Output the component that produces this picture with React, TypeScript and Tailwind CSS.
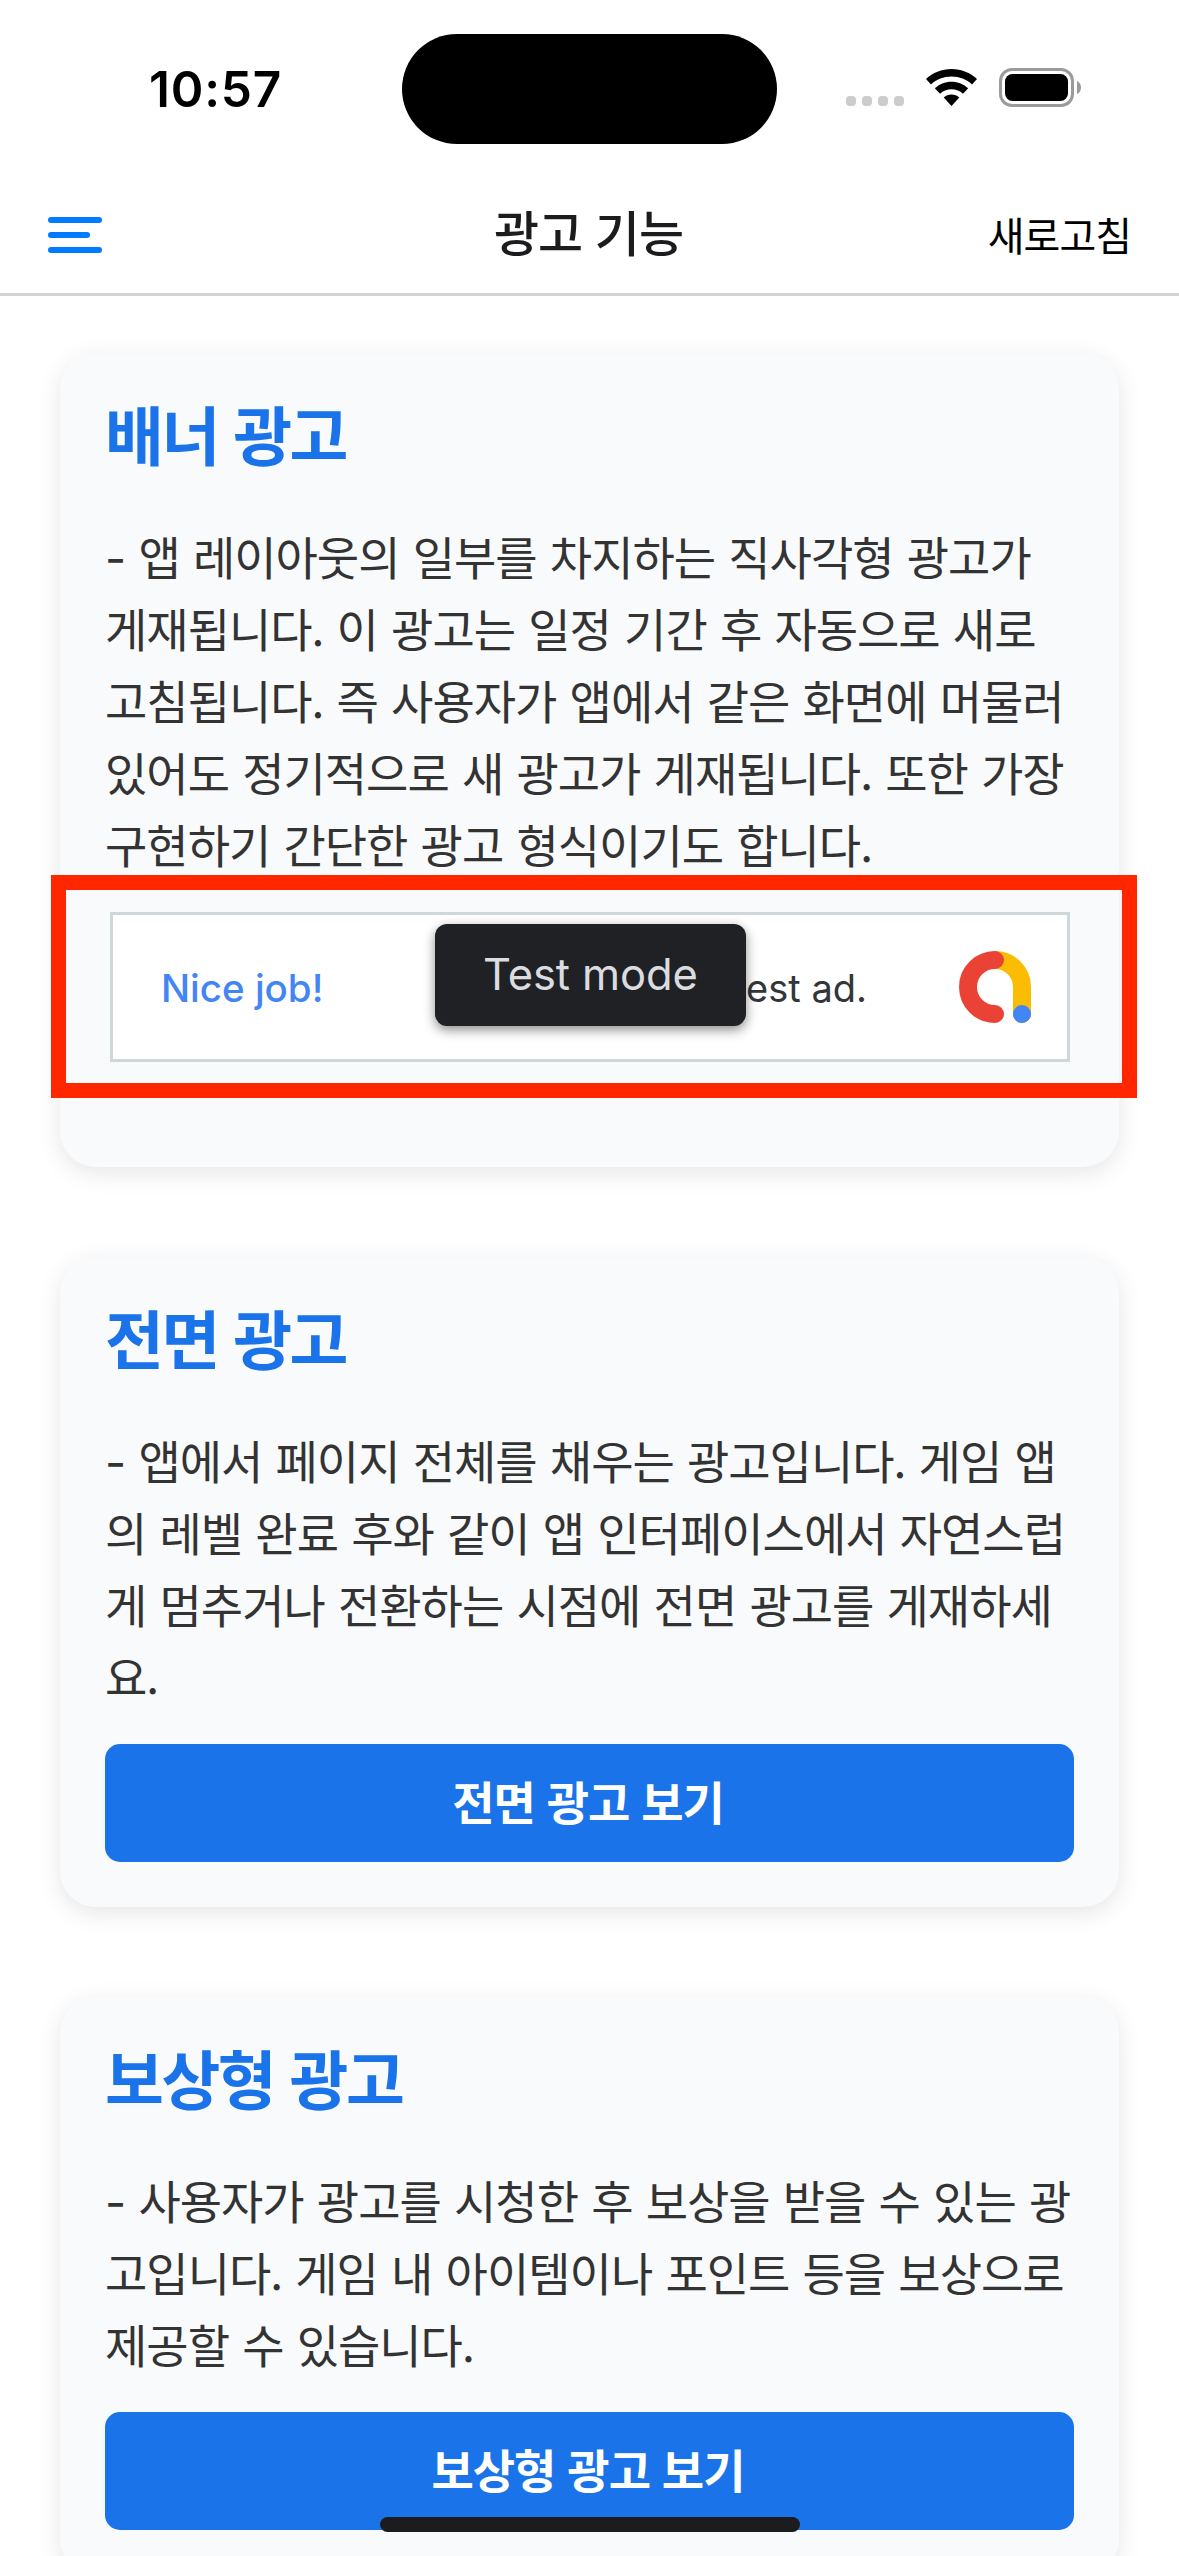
import type { ReactNode } from 'react';

type AdSection = {
  title: string;
  lines: string[];
  action?: string;
};

const SECTIONS: AdSection[] = [
  {
    title: '배너 광고',
    lines: [
      '앱 레이아웃의 일부를 차지하는 직사각형 광고가',
      '게재됩니다. 이 광고는 일정 기간 후 자동으로 새로',
      '고침됩니다. 즉 사용자가 앱에서 같은 화면에 머물러',
      '있어도 정기적으로 새 광고가 게재됩니다. 또한 가장',
      '구현하기 간단한 광고 형식이기도 합니다.',
    ],
  },
  {
    title: '전면 광고',
    lines: [
      '앱에서 페이지 전체를 채우는 광고입니다. 게임 앱',
      '의 레벨 완료 후와 같이 앱 인터페이스에서 자연스럽',
      '게 멈추거나 전환하는 시점에 전면 광고를 게재하세',
      '요.',
    ],
    action: '전면 광고 보기',
  },
  {
    title: '보상형 광고',
    lines: [
      '사용자가 광고를 시청한 후 보상을 받을 수 있는 광',
      '고입니다. 게임 내 아이템이나 포인트 등을 보상으로',
      '제공할 수 있습니다.',
    ],
    action: '보상형 광고 보기',
  },
];

function WifiIcon() {
  return (
    <svg width="51" height="37" viewBox="0 0 51 37">
      <path d="M25.5 0C35.3 0 44.3 3.8 51 10L46 15.4C40.6 10.6 33.4 7.6 25.5 7.6S10.4 10.6 5 15.4L0 10C6.7 3.8 15.7 0 25.5 0Z" />
      <path d="M25.5 12.7C32 12.7 37.8 15.2 42.2 19.3L37 24.7C34 22 30 20.3 25.5 20.3S17 22 14 24.7L8.8 19.3C13.2 15.2 19 12.7 25.5 12.7Z" />
      <path d="M25.5 25.4C28.5 25.4 31.2 26.5 33.3 28.5L25.5 37L17.7 28.5C19.8 26.5 22.5 25.4 25.5 25.4Z" />
    </svg>
  );
}

function BatteryIcon() {
  return (
    <svg width="82" height="39" viewBox="0 0 82 39">
      <rect x="1.5" y="1.5" width="72" height="36" rx="11.5" fill="none" stroke="#9b9b9b" strokeWidth="3" />
      <rect x="6" y="6" width="63" height="27" rx="7.5" />
      <path d="M78 13C80.5 14 82 16.5 82 19.5S80.5 25 78 26Z" fill="#9b9b9b" />
    </svg>
  );
}

function AdMobLogo() {
  return (
    <svg width="73" height="73" viewBox="0 0 73 73" fill="none" strokeWidth="18" strokeLinecap="round">
      <path d="M36 9A27 27 0 0 1 63 36V63" stroke="#fbbc04" />
      <path d="M36 9A27 27 0 0 0 36 63" stroke="#ea4335" />
      <circle cx="63" cy="63" r="9" fill="#4285f4" />
    </svg>
  );
}

function StatusBar() {
  return (
    <div className="relative flex h-[177px] items-start justify-between pl-[149px] pr-[98px]">
      <span className="mt-[59px] font-['Inter'] text-[49.5px] leading-[60px] font-semibold tracking-[0.8px] text-black">
        10:57
      </span>
      <div className="absolute top-[34px] left-[402px] h-[110px] w-[375px] rounded-full bg-black" />
      <div className="mt-[68px] flex h-[39px] items-center">
        <div className="mr-[22px] mt-[27px] flex gap-[6px]">
          {[0, 1, 2, 3].map(i => (
            <span key={i} className="size-[10px] rounded-[4px] bg-[#cccccc]" />
          ))}
        </div>
        <WifiIcon />
        <div className="ml-[22px]">
          <BatteryIcon />
        </div>
      </div>
    </div>
  );
}

function NavBar() {
  return (
    <div className="relative flex h-[119px] items-center justify-between border-b-[3px] border-[#d3d3d4] px-12">
      <button className="flex flex-col gap-[9px]">
        <span className="h-[6px] w-[54px] rounded-full bg-[#007aff]" />
        <span className="h-[6px] w-[42px] rounded-full bg-[#007aff]" />
        <span className="h-[6px] w-[54px] rounded-full bg-[#007aff]" />
      </button>
      <h1 className="absolute inset-x-0 pr-[2px] pb-[8px] text-center text-[49px] leading-[60px] font-medium tracking-[-1px] text-[#1c1c1e]">
        광고 기능
      </h1>
      <button className="pb-[3px] text-[40px] leading-[60px] tracking-[-1px] text-black">새로고침</button>
    </div>
  );
}

function BannerAd() {
  return (
    <div className="relative mt-[30px] mb-[60px] ml-[5px] flex h-[150px] w-[960px] items-center border-[3px] border-[#d0d7da] bg-white font-['Inter']">
      <span className="mt-[3px] ml-[48px] text-[38.5px] font-medium text-[#4285f4]">Nice job!</span>
      <span className="mt-[3px] ml-auto mr-[92px] text-[38px] text-[#333538]">test ad.</span>
      <div className="mr-[35px]">
        <AdMobLogo />
      </div>
      <div className="absolute top-[9px] left-[322px] flex h-[102px] w-[311px] items-center justify-center rounded-[12px] bg-[#202124] text-[43.5px] tracking-[-0.1px] text-[#dadce0] shadow-[0_4px_12px_rgba(0,0,0,0.45)]">
        Test mode
      </div>
      {/* highlight frame around the banner slot */}
      <div className="absolute -top-[40px] -left-[62px] h-[223px] w-[1086px] border-[15px] border-[#ff2600]" />
    </div>
  );
}

function AdCard({ section, children }: { section: AdSection; children?: ReactNode }) {
  return (
    <section className="rounded-[36px] bg-[#f8fafc] px-[45px] pt-[39px] pb-[45px] shadow-[0_6px_24px_rgba(0,0,0,0.1)]">
      <h2 className="mb-[47px] text-[64px] leading-[80px] font-bold tracking-[-2.5px] text-[#1a73e8]">
        {section.title}
      </h2>
      <p className="text-[46px] leading-[72px] tracking-[-1px] [word-spacing:1.3px] text-[#333333]">
        {section.lines.map((line, i) => (
          <span key={line} className="block h-[72px] whitespace-nowrap">
            {i === 0 && <span className="font-['Inter'] leading-none">- </span>}
            {line}
          </span>
        ))}
      </p>
      {children}
      {section.action && (
        <button className="mt-[33px] flex h-[118px] w-full items-center justify-center rounded-[15px] bg-[#1a73e8] pr-[3px] pb-[7px] text-[46px] leading-[60px] font-bold tracking-[-1px] text-white">
          {section.action}
        </button>
      )}
    </section>
  );
}

export default function App() {
  return (
    <div
      lang="ko"
      className="relative h-[2556px] w-[1179px] overflow-hidden bg-white font-['Noto_Sans_CJK_KR',sans-serif]"
    >
      <StatusBar />
      <NavBar />
      <main className="flex flex-col gap-[90px] px-[60px] pt-[57px]">
        {SECTIONS.map((section, i) => (
          <AdCard key={section.title} section={section}>
            {i === 0 && (
              <div className="pt-[3px]">
                <BannerAd />
              </div>
            )}
          </AdCard>
        ))}
      </main>
      {/* home indicator */}
      <div className="absolute top-[2517px] left-[380px] h-[15px] w-[420px] rounded-full bg-[#1c1c1e]" />
    </div>
  );
}
